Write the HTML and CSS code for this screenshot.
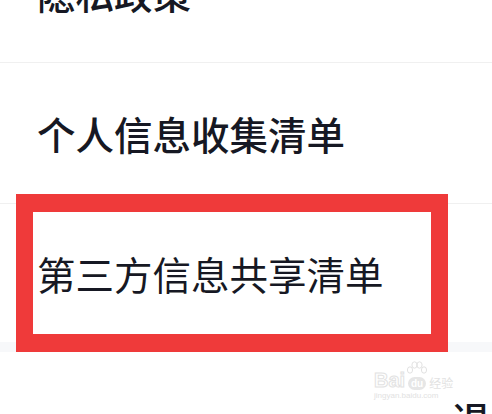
FILE: index.html
```html
<!DOCTYPE html>
<html lang="zh-CN">

<head>
    <meta charset="UTF-8">
    <meta name="viewport" content="width=device-width, initial-scale=1.0">
    <title>设置</title>
    <link rel="stylesheet" href="styles.css">
</head>

<body>
    <div class="page">
        <ul class="menu">
            <li class="item strong">隐私政策</li>
            <li class="item strong">个人信息收集清单</li>
            <li class="item last">第三方信息共享清单</li>
        </ul>
        <div class="gap"></div>
        <div class="logout">
            <span>退出登录</span>
        </div>

        <!-- 标注框 -->
        <div class="mark"></div>

        <!-- 水印 -->
        <div class="watermark">
            <div class="wm-top">
                <span class="wm-bai">Bai</span>
                <span class="wm-paw">
                    <svg width="22" height="16" viewBox="0 0 22 16">
                        <ellipse cx="4" cy="9" rx="2.6" ry="3.2" />
                        <ellipse cx="8.5" cy="4" rx="2.6" ry="3.2" />
                        <ellipse cx="13.5" cy="4" rx="2.6" ry="3.2" />
                        <ellipse cx="18" cy="9" rx="2.6" ry="3.2" />
                    </svg>
                    <i>du</i>
                </span>
                <span class="wm-cn">经验</span>
            </div>
            <div class="wm-url">jingyan.baidu.com</div>
        </div>
    </div>
</body>

</html>
```

FILE: styles.css
```css
* {
    margin: 0;
    padding: 0;
}

body {
    background: #fff;
    font-family: "Noto Sans CJK SC", "Noto Sans", sans-serif;
    color: #161823;
    overflow: hidden;
}

.page {
    position: relative;
    width: 492px;
    height: 414px;
    overflow: hidden;
}

.menu {
    list-style: none;
    margin-top: -78px;
}

.menu .item {
    display: flex;
    align-items: center;
    height: 140px;
    padding-left: 37px;
    font-size: 38.5px;
    border-bottom: 1px solid #f0f0f0;
}

.menu .item.strong {
    font-weight: 500;
}

.menu .item.last {
    height: 138px;
    border-bottom: none;
}

.gap {
    height: 10px;
    background: #f7f8fa;
}

.logout {
    padding: 38px 0 0 452px;
    font-size: 38.5px;
    font-weight: 500;
    white-space: nowrap;
}

.mark {
    position: absolute;
    left: 16px;
    top: 194px;
    width: 432px;
    height: 158px;
    box-sizing: border-box;
    border: 17px solid #ef3a3a;
    border-top-width: 18px;
    border-bottom-width: 18px;
}

.watermark {
    position: absolute;
    left: 374px;
    top: 360px;
    width: 84px;
    color: #e6e6e6;
    font-family: "Liberation Sans", Arial, sans-serif;
}

.wm-top {
    display: flex;
    align-items: flex-end;
    height: 30px;
}

.wm-bai {
    font-size: 20px;
    font-weight: bold;
    line-height: 20px;
    color: #fff;
    -webkit-text-stroke: 1px #e2e2e2;
}

.wm-paw {
    display: flex;
    flex-direction: column;
    align-items: center;
    width: 24px;
}

.wm-paw svg {
    fill: none;
    stroke: #e2e2e2;
    stroke-width: 1;
}

.wm-paw i {
    font-style: normal;
    font-size: 10px;
    font-weight: bold;
    line-height: 13px;
    padding: 0 3px;
    border-radius: 7px;
    background: #e6e6e6;
    color: #fff;
}

.wm-cn {
    font-family: "Noto Sans CJK SC", sans-serif;
    font-size: 12px;
    line-height: 14px;
    color: #e2e2e2;
}

.wm-url {
    font-size: 8px;
    line-height: 10px;
    margin-top: 1px;
    color: #e2e2e2;
}
```
